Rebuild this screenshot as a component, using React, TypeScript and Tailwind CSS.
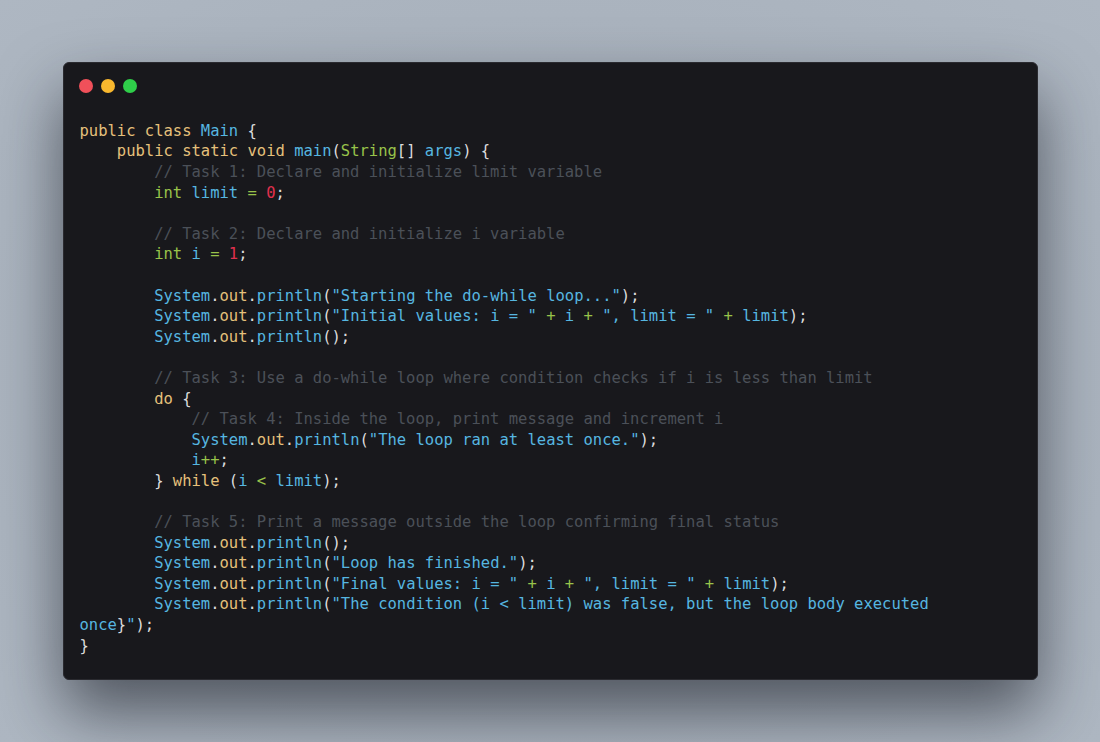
type Tok = [string, string];

const K = 'text-[#e5c07b]';
const B = 'text-[#56b6e0]';
const G = 'text-[#98c34a]';
const R = 'text-[#e0304e]';
const C = 'text-[#4b5058]';
const W = 'text-[#dcdcdc]';

const println = (args: Tok[], indent = '        '): Tok[] => [
  [W, indent],
  [B, 'System'],
  [W, '.'],
  [K, 'out'],
  [W, '.'],
  [B, 'println'],
  [W, '('],
  ...args,
  [W, ');'],
];

const lines: Tok[][] = [
  [[K, 'public class '], [B, 'Main'], [W, ' {']],
  [[K, '    public static void '], [B, 'main'], [W, '('], [G, 'String'], [W, '[] '], [B, 'args'], [W, ') {']],
  [[C, '        // Task 1: Declare and initialize limit variable']],
  [[W, '        '], [G, 'int '], [B, 'limit '], [G, '= '], [R, '0'], [W, ';']],
  [],
  [[C, '        // Task 2: Declare and initialize i variable']],
  [[W, '        '], [G, 'int '], [B, 'i '], [G, '= '], [R, '1'], [W, ';']],
  [],
  println([[B, '"Starting the do-while loop..."']]),
  println([[B, '"Initial values: i = " '], [G, '+'], [B, ' i '], [G, '+'], [B, ' ", limit = " '], [G, '+'], [B, ' limit']]),
  println([]),
  [],
  [[C, '        // Task 3: Use a do-while loop where condition checks if i is less than limit']],
  [[W, '        '], [K, 'do'], [W, ' {']],
  [[C, '            // Task 4: Inside the loop, print message and increment i']],
  println([[B, '"The loop ran at least once."']], '            '),
  [[W, '            '], [B, 'i'], [G, '++'], [W, ';']],
  [[W, '        } '], [K, 'while'], [W, ' ('], [B, 'i '], [G, '<'], [B, ' limit'], [W, ');']],
  [],
  [[C, '        // Task 5: Print a message outside the loop confirming final status']],
  println([]),
  println([[B, '"Loop has finished."']]),
  println([[B, '"Final values: i = " '], [G, '+'], [B, ' i '], [G, '+'], [B, ' ", limit = " '], [G, '+'], [B, ' limit']]),
  [
    [W, '        '],
    [B, 'System'],
    [W, '.'],
    [K, 'out'],
    [W, '.'],
    [B, 'println'],
    [W, '('],
    [B, '"The condition (i < limit) was false, but the loop body executed'],
  ],
  [[B, 'once'], [W, '}'], [B, '"'], [W, ');']],
  [[W, '}']],
];

export default function App() {
  return (
    <main className="flex h-[742px] w-[1100px] items-center justify-center bg-[radial-gradient(ellipse_at_center,#969faa_0%,#a9b2bd_60%,#aeb7c2_100%)]">
      <div className="w-[975px] rounded-md border border-[#2a2a2f] bg-[#18181c] pl-4 pr-4 pt-4 pb-[23px] shadow-[0_32px_64px_rgba(20,24,32,0.6)]">
        <div className="flex gap-2 -ml-px">
          <span className="h-[14px] w-[14px] rounded-full bg-[#f0505a]" />
          <span className="h-[14px] w-[14px] rounded-full bg-[#f9b82e]" />
          <span className="h-[14px] w-[14px] rounded-full bg-[#2fcf4a]" />
        </div>
        <pre className="mt-[28px] whitespace-pre font-['DejaVu_Sans_Mono',monospace] text-[15.5px] leading-[20.6px]">
          {lines.map((line, i) => (
            <div key={i} className="h-[20.6px]">
              {line.map(([cls, text], j) => (
                <span key={j} className={cls}>
                  {text}
                </span>
              ))}
            </div>
          ))}
        </pre>
      </div>
    </main>
  );
}
